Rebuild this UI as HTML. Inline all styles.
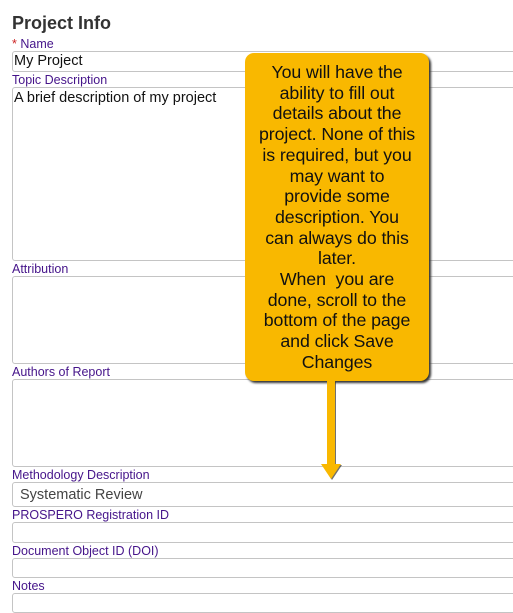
<!DOCTYPE html>
<html><head><style>
body{margin:0;background:#fff;font-family:"Liberation Sans",Arial,sans-serif;width:513px;height:601px;overflow:hidden;position:relative}
h1{position:absolute;left:12px;top:11px;margin:0;font-size:18px;font-weight:bold;color:#333;line-height:24px}
.l{position:absolute;left:12px;font-size:12.5px;color:#45148a;line-height:14px}
.f{position:absolute;left:12px;width:520px;border:1px solid #c4c4c4;border-radius:3px;box-sizing:border-box;font-size:14.5px;color:#111;padding:2px 1px;background:#fff}
.c{position:absolute;left:245px;top:53px;width:184px;height:328px;background:#f9b800;border-radius:9px;box-shadow:2px 2px 2px #333;text-align:center;font-size:17.8px;line-height:20.7px;color:#111;padding-top:9px;box-sizing:border-box;letter-spacing:-0.1px}
</style></head><body>
<h1>Project Info</h1>
<div class="l" style="top:37px"><span style="color:#c22">*</span> Name</div>
<div class="f" style="top:51px;height:21px;padding-top:1px">My Project</div>
<div class="l" style="top:73px">Topic Description</div>
<div class="f" style="top:87px;height:174px">A brief description of my project</div>
<div class="l" style="top:262px">Attribution</div>
<div class="f" style="top:276px;height:88px"></div>
<div class="l" style="top:365px">Authors of Report</div>
<div class="f" style="top:379px;height:88px"></div>
<div class="l" style="top:468px">Methodology Description</div>
<div class="f" style="top:482px;height:25px;padding:4px 7px;color:#444">Systematic Review</div>
<div class="l" style="top:508px">PROSPERO Registration ID</div>
<div class="f" style="top:522px;height:21px"></div>
<div class="l" style="top:544px">Document Object ID (DOI)</div>
<div class="f" style="top:558px;height:20px"></div>
<div class="l" style="top:579px">Notes</div>
<div class="f" style="top:593px;height:20px"></div>
<div class="c">You will have the<br>ability to fill out<br>details about the<br>project. None of this<br>is required, but you<br>may want to<br>provide some<br>description. You<br>can always do this<br>later.<br>When &nbsp;you are<br>done, scroll to the<br>bottom of the page<br>and click Save<br>Changes</div>
<svg style="position:absolute;left:0;top:0" width="513" height="601">
<polygon points="327,381 335,381 335,464 341,464 331,479 321,464 327,464" fill="#333" transform="translate(1,1)" opacity="0.7"/>
<polygon points="327,381 335,381 335,464 341,464 331,479 321,464 327,464" fill="#f9b800"/>
</svg>
</body></html>
